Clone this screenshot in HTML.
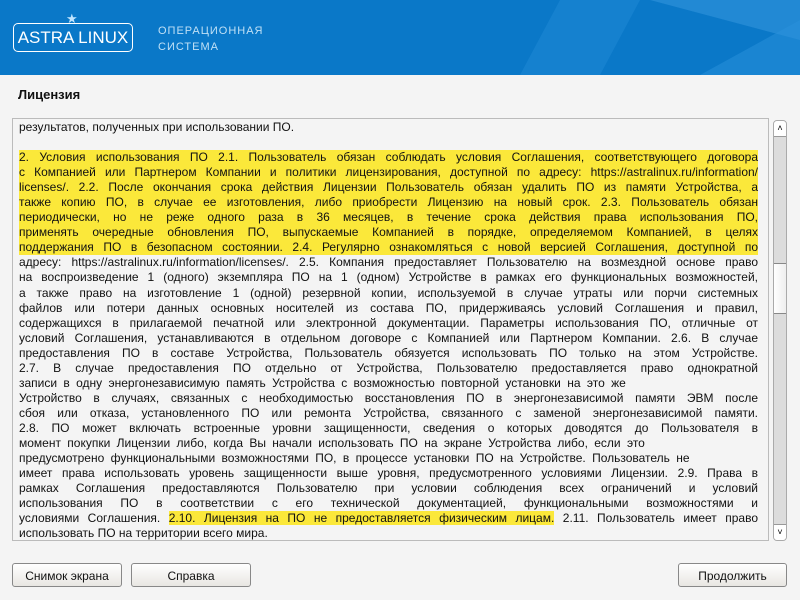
<!DOCTYPE html><html><head><meta charset="utf-8"><style>
body{margin:0;width:800px;height:600px;background:#f4f4f4;font-family:"Liberation Sans","DejaVu Sans",sans-serif;position:relative;overflow:hidden}
#hdr{position:absolute;left:0;top:0;width:800px;height:75px;background:#0a78c8;overflow:hidden}
.logo{position:absolute;left:13px;top:23px;width:118px;height:27px;border:1.5px solid #fff;border-radius:5px;color:#fff;font-size:17px;line-height:28px;text-align:center;white-space:nowrap}
.os{position:absolute;left:158px;top:23px;color:#bfe0f6;font-size:11px;line-height:16px;letter-spacing:1px}
h1{position:absolute;left:18px;top:87px;margin:0;font-size:13px;font-weight:bold;color:#111}
#box{position:absolute;left:12px;top:118px;width:757px;height:423px;border:1px solid #bbb;background:#f4f4f4;box-sizing:border-box}
#txt{position:absolute;left:19px;top:120px;width:739px;font-size:12px;color:#111}
.l{height:15.05px;line-height:15.05px;text-align:justify;text-align-last:justify;white-space:nowrap;overflow:hidden}
.l.e{text-align-last:left}
.y{background:#fbe83a}
#sb{position:absolute;left:773px;top:120px;width:14px;height:421px;background:#dcdcdc;border:1px solid #aaa;border-radius:4px;box-sizing:border-box}
.btn{position:absolute;top:563px;height:24px;border:1px solid #888;border-radius:3px;background:linear-gradient(#fff,#e8e6e2);font-size:12px;line-height:24px;text-align:center;color:#111;box-sizing:border-box}
</style></head><body>
<div id="hdr">
<svg width="800" height="75" style="position:absolute;left:0;top:0"><polygon points="560,0 640,0 600,75 520,75" fill="#1f8ad6" opacity=".5"/><polygon points="650,0 800,0 800,40" fill="#3a9ae0" opacity=".5"/><polygon points="700,75 800,20 800,75" fill="#2a92dc" opacity=".5"/></svg>
<div class="logo">ASTRA LINUX</div>
<div style="position:absolute;left:66px;top:11px;color:#bfe4ff;font-size:13px">★</div>
<div class="os">ОПЕРАЦИОННАЯ<br>СИСТЕМА</div>
</div>
<h1>Лицензия</h1>
<div id="box"></div>
<div id="txt">
<div class="l e">результатов, полученных при использовании ПО.</div>
<div class="l e">&nbsp;</div>
<div class="l y">2. Условия использования ПО 2.1. Пользователь обязан соблюдать условия Соглашения, соответствующего договора</div>
<div class="l y">с Компанией или Партнером Компании и политики лицензирования, доступной по адресу: https://astralinux.ru/information/</div>
<div class="l y">licenses/. 2.2. После окончания срока действия Лицензии Пользователь обязан удалить ПО из памяти Устройства, а</div>
<div class="l y">также копию ПО, в случае ее изготовления, либо приобрести Лицензию на новый срок. 2.3. Пользователь обязан</div>
<div class="l y">периодически, но не реже одного раза в 36 месяцев, в течение срока действия права использования ПО,</div>
<div class="l y">применять очередные обновления ПО, выпускаемые Компанией в порядке, определяемом Компанией, в целях</div>
<div class="l y">поддержания ПО в безопасном состоянии. 2.4. Регулярно ознакомляться с новой версией Соглашения, доступной по</div>
<div class="l">адресу: https://astralinux.ru/information/licenses/. 2.5. Компания предоставляет Пользователю на возмездной основе право</div>
<div class="l">на воспроизведение 1 (одного) экземпляра ПО на 1 (одном) Устройстве в рамках его функциональных возможностей,</div>
<div class="l">а также право на изготовление 1 (одной) резервной копии, используемой в случае утраты или порчи системных</div>
<div class="l">файлов или потери данных основных носителей из состава ПО, придерживаясь условий Соглашения и правил,</div>
<div class="l">содержащихся в прилагаемой печатной или электронной документации. Параметры использования ПО, отличные от</div>
<div class="l">условий Соглашения, устанавливаются в отдельном договоре с Компанией или Партнером Компании. 2.6. В случае</div>
<div class="l">предоставления ПО в составе Устройства, Пользователь обязуется использовать ПО только на этом Устройстве.</div>
<div class="l">2.7. В случае предоставления ПО отдельно от Устройства, Пользователю предоставляется право однократной</div>
<div class="l e" style="word-spacing:3px">записи в одну энергонезависимую память Устройства с возможностью повторной установки на это же</div>
<div class="l">Устройство в случаях, связанных с необходимостью восстановления ПО в энергонезависимой памяти ЭВМ после</div>
<div class="l">сбоя или отказа, установленного ПО или ремонта Устройства, связанного с заменой энергонезависимой памяти.</div>
<div class="l">2.8. ПО может включать встроенные уровни защищенности, сведения о которых доводятся до Пользователя в</div>
<div class="l e" style="word-spacing:3px">момент покупки Лицензии либо, когда Вы начали использовать ПО на экране Устройства либо, если это</div>
<div class="l e" style="word-spacing:3px">предусмотрено функциональными возможностями ПО, в процессе установки ПО на Устройстве. Пользователь не</div>
<div class="l">имеет права использовать уровень защищенности выше уровня, предусмотренного условиями Лицензии. 2.9. Права в</div>
<div class="l">рамках Соглашения предоставляются Пользователю при условии соблюдения всех ограничений и условий</div>
<div class="l">использования ПО в соответствии с его технической документацией, функциональными возможностями и</div>
<div class="l">условиями Соглашения. <span class="y">2.10. Лицензия на ПО не предоставляется физическим лицам.</span> 2.11. Пользователь имеет право</div>
<div class="l e">использовать ПО на территории всего мира.</div>
</div>
<div id="sb">
<div style="position:absolute;left:0;top:0;width:12px;height:15px;background:#fff;border-bottom:1px solid #999;border-radius:3px 3px 0 0;font-size:9px;text-align:center;line-height:15px">˄</div>
<div style="position:absolute;left:0;top:142px;width:12px;height:49px;background:linear-gradient(90deg,#fff,#eee);border-top:1px solid #888;border-bottom:1px solid #888"></div>
<div style="position:absolute;left:0;bottom:0;width:12px;height:15px;background:#fff;border-top:1px solid #999;border-radius:0 0 3px 3px;font-size:9px;text-align:center;line-height:15px">˅</div>
</div>
<div class="btn" style="left:12px;width:110px">Снимок экрана</div>
<div class="btn" style="left:131px;width:120px">Справка</div>
<div class="btn" style="left:678px;width:109px">Продолжить</div>
</body></html>
